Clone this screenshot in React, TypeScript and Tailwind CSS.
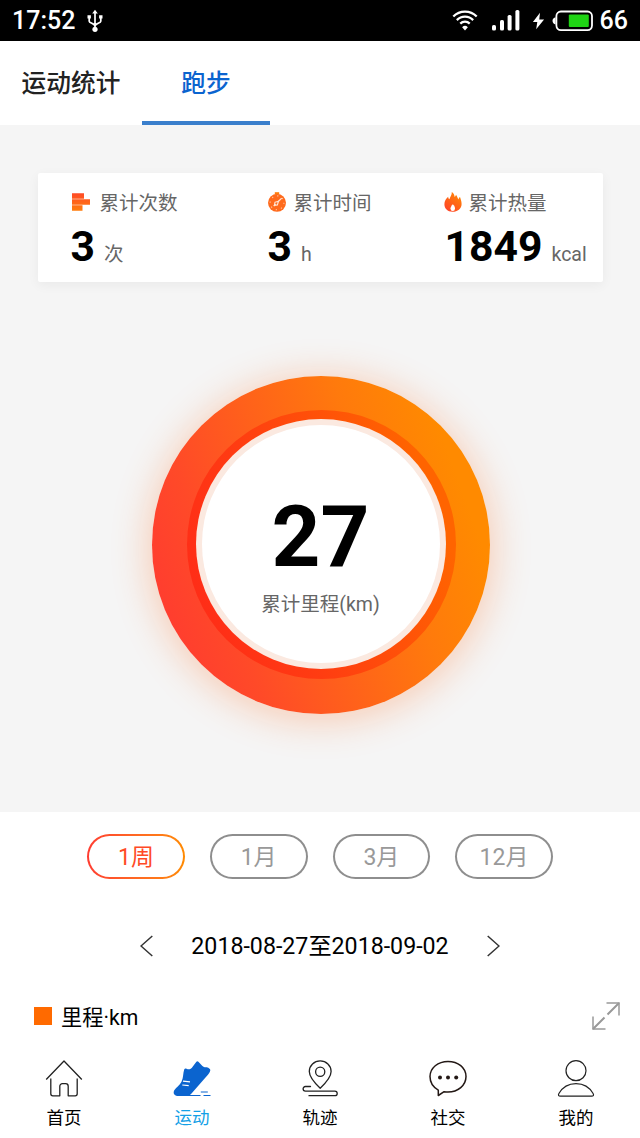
import { useState } from "react";
import type { ReactNode } from "react";
import clsx from "clsx";

const periods = ["1周", "1月", "3月", "12月"];

const UsbIcon = () => (
  <svg width="16" height="24" viewBox="0 0 16 24" fill="none" stroke="white" strokeWidth="1.7">
    <path d="M8 4v15M2.2 8v4.2c0 2 5.8 2.3 5.8 5M13.8 8v4.2c0 2-5.8 2.3-5.8 5" />
    <path d="M8 0.8 10.8 4.6H5.2ZM.5 6.3h3.4v3.2H.5ZM12.1 6.3h3.4v3.2h-3.4Z" fill="white" stroke="none" />
    <circle cx="8" cy="20.3" r="2.6" fill="white" stroke="none" />
  </svg>
);

const WifiIcon = () => (
  <svg width="26" height="23" viewBox="0 0 28 24" fill="none" stroke="white" strokeWidth="2.4">
    <path d="M1.4 7.8a17.5 17.5 0 0 1 25.2 0M5.2 11.6a12.2 12.2 0 0 1 17.6 0M8.9 15.4a7.2 7.2 0 0 1 10.2 0" />
    <path d="m14 22.8-3.1-3.6a4.5 4.5 0 0 1 6.2 0Z" fill="white" stroke="none" />
  </svg>
);

const SignalIcon = () => (
  <svg width="28" height="21" viewBox="0 0 28 21" fill="white">
    <rect x="0" y="15" width="4" height="5.5" rx="1.6" />
    <rect x="8" y="10" width="4" height="10.5" rx="1.6" />
    <rect x="15.6" y="5" width="4" height="15.5" rx="1.6" />
    <rect x="23.4" y="0" width="4" height="20.5" rx="1.6" />
  </svg>
);

const BatteryIcon = () => (
  <svg width="42" height="22" viewBox="0 0 42 22" fill="none">
    <rect x="4.4" y="1.5" width="35.6" height="18.6" rx="4.5" stroke="white" strokeWidth="1.8" />
    <path d="M3.6 7.2v7.2C1.8 14.2.5 12.6.5 10.8s1.3-3.4 3.1-3.6Z" fill="white" />
    <rect x="16.8" y="4.6" width="20" height="12.4" rx="1" fill="#1fd414" />
  </svg>
);

const CountIcon = () => (
  <svg width="20" height="20" viewBox="0 0 20 20">
    <defs>
      <linearGradient id="count" x1="0" y1="0" x2="0" y2="1">
        <stop offset="0" stopColor="#ff4a26" />
        <stop offset="1" stopColor="#ff7d0c" />
      </linearGradient>
    </defs>
    <path d="M1 1.200h12v5.500H1ZM1 7.200h18v5.500H1ZM1 13.200h10.500v5.500H1Z" fill="url(#count)" />
  </svg>
);

const TimerIcon = () => (
  <svg width="20" height="20" viewBox="0 0 20 20">
    <circle cx="10" cy="10.8" r="9" fill="#ff6a1c" />
    <path d="M7.8.2h4.4v2H7.8Z" fill="#ff7d0c" />
    <circle cx="10" cy="10.8" r="6.9" fill="none" stroke="#ffc6a4" strokeWidth="1.1" strokeDasharray="1.2 4.22" />
    <path d="m10.8 10 3.9-3.9M8.6 12.2l-1.8 1.9" stroke="#ffe4d4" strokeWidth="1.3" />
    <path d="m8 10.3 3.4-1-1 3.6-3 .5Z" fill="none" stroke="#ffe4d4" strokeWidth="1.1" />
  </svg>
);

const FireIcon = () => (
  <svg width="20" height="20" viewBox="0 0 20 20">
    <defs>
      <linearGradient id="fire" x1="0" y1="1" x2=".7" y2="0">
        <stop offset="0" stopColor="#ff3c2c" />
        <stop offset="1" stopColor="#ff8606" />
      </linearGradient>
    </defs>
    <path d="M8.8 0c.3 3-1.7 4.7-2.4 7.2C5.5 6.8 5.2 5.8 5.2 4.8 3 6.8 1.4 9.2 1.4 12.2c0 4.2 3.1 7.5 8.1 7.5s9.1-3 9.1-7.8c0-2.8-1-4.7-1.6-6.9-.9.5-1.3 1.5-1.5 2.5-1-1.2-.8-2.7-2.5-4.7-.2 1-.7 1.7-1.3 2.2C11.5 3.2 10.7 1.3 8.8 0Z" fill="url(#fire)" />
    <path d="M9.8 12.2c1.5 1.3 2.2 2.9 2.2 4.3a2.2 2.5 0 0 1-4.5 0c0-1.5 1-2.8 2.3-4.3Z" fill="white" />
  </svg>
);

const HomeIcon = () => (
  <svg width="38" height="38" viewBox="0 0 38 38" fill="none" stroke="#222" strokeWidth="1.3" strokeLinejoin="round">
    <path d="M1.2 20.5 19 2l17.8 18.5M5.8 19.5v15.3a2 2 0 0 0 2 2h7v-9.6a2.6 2.6 0 0 1 2.6-2.6h3.2a2.6 2.6 0 0 1 2.6 2.6v9.6h7a2 2 0 0 0 2-2V19.5" />
  </svg>
);

const ShoeIcon = () => (
  <svg width="38" height="38" viewBox="0 0 38 38" fill="none">
    <path d="M11.3 10.2c.6-.8 1.3-.9 2.2-.4 2.300.9 3.700.6 5.200-.9l4.500-6c.7-.9 1.500-.9 2.200-.1l4 4.200c1 1 2 1.300 3.500 1.300 1.200 0 2 .2 3.300 1.200 1.100.8 1.400 1.600.8 2.900-.8 1.900-2.600 4-4.500 6L18.500 34.500c-1.400 1.700-2.500 2.500-4.500 2.500H5c-3.200 0-4.800-2.200-4.200-4.500 1-3.500 5.600-5.300 7.900-10.300 1.800-3.900 1.200-7.800 2.600-12Z" fill="#0b64cf" />
    <path d="m10 22.2 7 .7M9.3 26l6.4.7" stroke="white" strokeWidth="1.2" />
    <path d="M12 36.5h15.500M27.800 33h7M30.500 36.500h7" stroke="#0b64cf" strokeWidth="1.2" />
  </svg>
);

const TrackIcon = () => (
  <svg width="38" height="38" viewBox="0 0 38 38" fill="none" stroke="#222" strokeWidth="1.3" strokeLinecap="round">
    <path d="M19.2 29.2C13.5 23.7 8.3 17.6 8.3 12.4a10.9 10.5 0 0 1 21.8 0c0 5.2-5.2 11.3-10.9 16.8Z" />
    <circle cx="19.2" cy="12.8" r="4.6" />
    <path d="M9.5 27.5H4.4a2.3 2.3 0 0 0 0 4.6h29.5a2.3 2.3 0 0 1 0 4.6H8" />
  </svg>
);

const ChatIcon = () => (
  <svg width="38" height="38" viewBox="0 0 38 38" fill="none" stroke="#231815" strokeWidth="1.5" strokeLinejoin="round">
    <path d="M9.3 31.2v5.3l5.8-3.8c1.3.3 2.6.4 3.9.4 10 0 18-6.7 18-15.5S29 2.4 19 2.4 1 8.9 1 17.6c0 5.7 3.2 10.7 8.3 13.6Z" />
    <g fill="#231815" stroke="none">
      <circle cx="11" cy="18.5" r="2" />
      <circle cx="19" cy="18.5" r="2" />
      <circle cx="27.2" cy="18.5" r="2" />
    </g>
  </svg>
);

const UserIcon = () => (
  <svg width="38" height="38" viewBox="0 0 38 38" fill="none" stroke="#222" strokeWidth="1.2">
    <circle cx="19" cy="11.7" r="10" />
    <path d="M3.5 37.2c-2 0-2.5-1.1-1.6-2.7C5.5 28.2 11.5 24.6 19 24.6s13.5 3.6 17.1 9.9c.9 1.6.4 2.7-1.6 2.7Z" />
  </svg>
);

interface StatProps {
  icon: ReactNode;
  label: string;
  value: string;
  unit: string;
  className: string;
}

const Stat = ({ icon, label, value, unit, className }: StatProps) => (
  <div className={className}>
    <div className="flex h-[60px] items-center text-[19.5px] text-[#666]">
      <div className="pb-0.5">{icon}</div>
      <span className="pt-0.5">{label}</span>
    </div>
    <div className="-mt-3 flex items-baseline leading-[50px]">
      <span className="text-[42.7px] font-bold text-black">{value}</span>
      <span className="ml-[9px] text-[19.5px] text-[#666]">{unit}</span>
    </div>
  </div>
);

const DistanceRing = () => (
  <div className="mt-[93.5px] ml-0.5 flex justify-center">
    <div className="flex size-[338px] items-center justify-center rounded-full bg-linear-[70deg,#ff3b30_8%,#ff4a28_25%,#ff7a0c_66%,#ff8a00_85%] shadow-[0_4px_36px_4px_rgba(255,120,50,0.32)]">
      <div className="flex size-[269px] items-center justify-center rounded-full bg-linear-[70deg,#ff2a18_5%,#ff3b12_35%,#ff6400_85%]">
        <div className="mr-px mb-0.5 flex size-[250px] items-center justify-center rounded-full bg-[#fbe9e0]">
          <div className="mt-px flex size-[238px] flex-col items-center rounded-full bg-white">
            <span className="mt-[62px] text-[85.3px] leading-[100px] font-bold text-black">27</span>
            <span className="mt-1 text-[19.5px] leading-7 text-[#666]">累计里程(km)</span>
          </div>
        </div>
      </div>
    </div>
  </div>
);

const navItems = [
  { label: "首页", icon: <HomeIcon /> },
  { label: "运动", icon: <ShoeIcon /> },
  { label: "轨迹", icon: <TrackIcon /> },
  { label: "社交", icon: <ChatIcon /> },
  { label: "我的", icon: <UserIcon /> },
];

export default function App() {
  const [period, setPeriod] = useState("1周");
  const [tab, setTab] = useState("运动");

  return (
    <div className="flex h-[1138px] w-[640px] flex-col overflow-hidden bg-white font-['Roboto','Noto_Sans_CJK_SC',sans-serif]">
      {/* Status bar */}
      <div className="flex h-[41px] shrink-0 items-center bg-black pl-3 text-[25px] text-white">
        <span className="font-medium">17:52</span>
        <div className="ml-3">
          <UsbIcon />
        </div>
        <div className="ml-auto flex items-center pr-3">
          <WifiIcon />
          <div className="ml-3.5"><SignalIcon /></div>
          <svg className="ml-3" width="13" height="18" viewBox="0 0 14 18" fill="white">
            <path d="M8.6 0 1 10h4.7L4.5 18 13 7.3H7.8Z" />
          </svg>
          <div className="ml-[7px]"><BatteryIcon /></div>
          <span className="ml-1.5 font-medium">66</span>
        </div>
      </div>

      {/* Header */}
      <header className="flex h-[84px] shrink-0 text-[24.7px]">
        <div className="flex w-[142px] items-center justify-center pt-0.5 font-medium text-[#222]">运动统计</div>
        <div className="flex w-32 items-center justify-center border-b-4 border-[#3a7fcc] pt-1.5 font-medium text-[#0b64cf]">跑步</div>
      </header>

      {/* Totals */}
      <section className="h-[687px] shrink-0 bg-[#f5f5f5] pt-12">
        <div className="mx-auto flex h-[109px] w-[565px] rounded-xs bg-white shadow-[0_3px_12px_rgba(0,0,0,0.05)]">
          <Stat className="w-[230px] pl-[33px]" icon={<div className="mr-[9px]"><CountIcon /></div>} label="累计次数" value="3" unit="次" />
          <Stat className="w-[177px]" icon={<div className="-ml-px mr-[7px]"><TimerIcon /></div>} label="累计时间" value="3" unit="h" />
          <Stat className="whitespace-nowrap" icon={<div className="-ml-0.5 mr-1.5"><FireIcon /></div>} label="累计热量" value="1849" unit="kcal" />
        </div>
        <DistanceRing />
      </section>

      {/* Period filter */}
      <div className="mt-[22px] flex shrink-0 justify-center gap-[25px] text-[23px]">
        {periods.map((item) => (
          <button
            key={item}
            onClick={() => setPeriod(item)}
            className={clsx(
              "h-[44.5px] w-[97.7px] rounded-full p-0.5",
              item === period ? "bg-linear-to-r from-[#ff3b30] to-[#ff8a00] text-[#ff4a26]" : "bg-[#8e8e8e] text-[#999]"
            )}
          >
            <span className="flex size-full items-center justify-center rounded-full bg-white pt-1">{item}</span>
          </button>
        ))}
      </div>

      <div className="mt-[47px] flex h-10 shrink-0 items-center justify-center gap-[38px] text-[23.2px] text-black">
        <svg width="13" height="22" viewBox="0 0 13 22" fill="none" stroke="#333" strokeWidth="1.5">
          <path d="M12.3 1 1 11l11.3 10" />
        </svg>
        <span className="pt-0.5">2018-08-27至2018-09-02</span>
        <svg width="13" height="22" viewBox="0 0 13 22" fill="none" stroke="#333" strokeWidth="1.5">
          <path d="M.7 1 12 11 .7 21" />
        </svg>
      </div>

      <div className="mt-[30.5px] flex h-10 shrink-0 items-center pr-5 pl-[34px] text-[21.2px] text-black">
        <div className="size-[18px] bg-[#ff6a00]" />
        <span className="ml-[9px] pt-[3px]">里程·km</span>
        <svg className="ml-auto" width="28" height="28" viewBox="0 0 28 28" fill="none" stroke="#999" strokeWidth="1.5">
          <path d="M14.5 1H27v12.500M1 14.500V27h12.500" />
          <path d="M27 1 15.500 12.500M12.500 15.500 1 27" strokeWidth="2" />
        </svg>
      </div>

      {/* Bottom navigation */}
      <nav className="mt-[23px] flex">
        {navItems.map(({ label, icon }) => (
          <button
            key={label}
            onClick={() => setTab(label)}
            className={clsx("flex w-32 flex-col items-center text-[17.5px]", label === tab ? "text-[#14a0e6]" : "text-black")}
          >
            {icon}
            <span className="mt-[9px] leading-6">{label}</span>
          </button>
        ))}
      </nav>
    </div>
  );
}
